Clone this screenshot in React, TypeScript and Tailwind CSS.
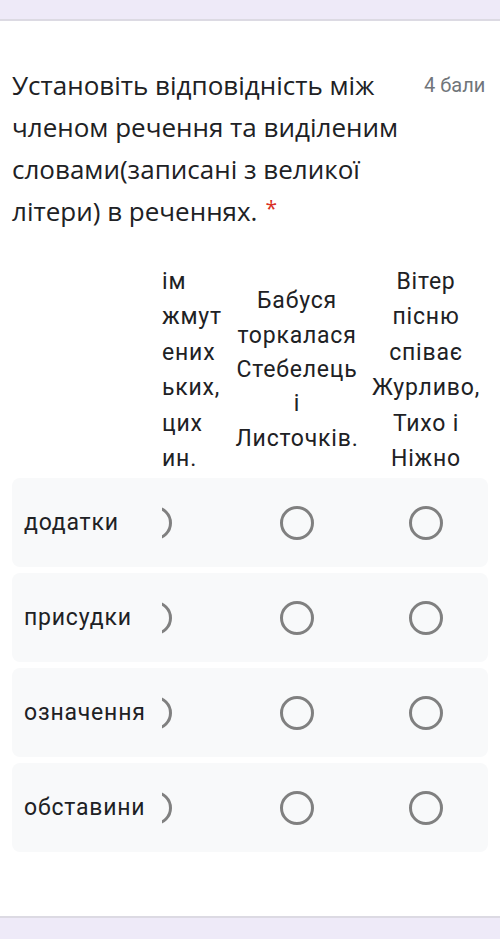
import React from 'react';

const rows = ['додатки', 'присудки', 'означення', 'обставини'];

const colOne = ['ім', 'жмут', 'ених', 'ьких,', 'цих', 'ин.'];
const colTwo = ['Бабуся', 'торкалася', 'Стебелець', 'і', 'Листочків.'];
const colThree = ['Вітер', 'пісню', 'співає', 'Журливо,', 'Тихо і', 'Ніжно'];

function Radio() {
  return <div className="w-[34px] h-[34px] shrink-0 rounded-full border-[3px] border-[#808080]" />;
}

export default function App() {
  return (
    <div className="w-[500px] h-[939px] bg-[#eeeaf8] flex flex-col overflow-hidden">
      <div className="h-[19px] shrink-0" />
      <div className="h-[899px] shrink-0 bg-white border-y-2 border-[#dcdae3] pt-[43px] px-[12px]">
        <div className="flex items-start">
          <h2
            className="w-[400px] text-[26px] leading-[42px] text-[#202124] font-normal"
            style={{ fontFamily: '"Open Sans", sans-serif' }}
          >
            Установіть відповідність між членом речення та виділеним словами(записані з великої літери) в реченнях.
            <span className="ml-[8px] text-[#d93025] text-[21px] leading-none relative -top-[5px]">*</span>
          </h2>
          <div
            className="ml-[12px] text-[20px] leading-[42px] text-[#70757a] whitespace-nowrap"
            style={{ fontFamily: 'Roboto, sans-serif' }}
          >
            4 бали
          </div>
        </div>

        <div className="mt-[32px] tracking-[0.8px]" style={{ fontFamily: 'Roboto, sans-serif' }}>
          <div className="flex items-center text-[23px] leading-[35.4px] text-[#202124]">
            <div className="w-[150px] shrink-0" />
            <div className="w-[68px] shrink-0 overflow-hidden">
              {colOne.map((t) => (
                <div key={t} className="whitespace-nowrap">{t}</div>
              ))}
            </div>
            <div className="w-[134px] shrink-0 text-center leading-[34.3px]">
              {colTwo.map((t) => (
                <div key={t}>{t}</div>
              ))}
            </div>
            <div className="w-[124px] shrink-0 text-center">
              {colThree.map((t) => (
                <div key={t} className="whitespace-nowrap">{t}</div>
              ))}
            </div>
          </div>

          <div className="mt-[2px] flex flex-col gap-[6px]">
            {rows.map((r) => (
              <div key={r} className="h-[89px] bg-[#f8f9fa] rounded-lg flex items-center">
                <div className="w-[150px] shrink-0 pl-[12px] text-[23px] text-[#202124]">{r}</div>
                <div className="w-[68px] shrink-0 overflow-hidden flex">
                  <div className="-ml-[24px]">
                    <Radio />
                  </div>
                </div>
                <div className="w-[134px] shrink-0 flex justify-center">
                  <Radio />
                </div>
                <div className="w-[124px] shrink-0 flex justify-center">
                  <Radio />
                </div>
              </div>
            ))}
          </div>
        </div>
      </div>
    </div>
  );
}
